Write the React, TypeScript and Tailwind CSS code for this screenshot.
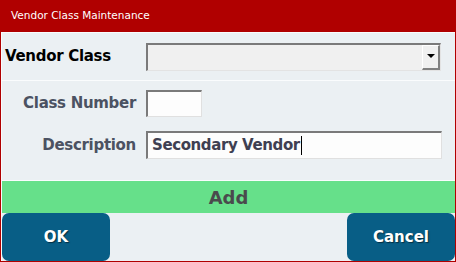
export default function App() {
  const font = { fontFamily: '"DejaVu Sans", Tahoma, sans-serif' }
  return (
    <div className="w-[456px] h-[262px] bg-[#b00000] flex flex-col pl-[1px] pr-[1px] pb-[1px]" style={font}>
      <div className="h-[32px] flex items-center pl-[10px] text-white text-[10.5px]">
        Vendor Class Maintenance
      </div>
      <div className="flex-1 flex flex-col bg-[#fafcfd] pl-[1px] pt-[1px]">
        <div className="h-[47px] bg-[#ebf0f3] flex items-center pl-[3px]">
          <span className="w-[141px] text-[15px] font-bold text-black tracking-[-0.3px]">Vendor Class</span>
          <div className="w-[295px] h-[28px] bg-[#f0f0f0] border-t-2 border-l-2 border-[#7a7a7a] border-b border-r border-b-[#e3e3e3] border-r-[#e3e3e3] flex justify-end items-stretch">
            <div className="w-[18px] border border-t-white border-l-white border-b-[#808080] border-r-[#808080] border-b-2 border-r-2 bg-[#f0f0f0] flex items-center justify-center">
              <svg width="8" height="5" viewBox="0 0 8 5"><path d="M0 0h8L4 4z" fill="#000" /></svg>
            </div>
          </div>
        </div>
        <div className="h-[1px]" />
        <div className="h-[99px] bg-[#ebf0f3] flex flex-col pt-[9px] gap-[14px]">
          <div className="flex items-center">
            <span className="w-[134px] text-right text-[15px] font-bold text-[#4b5262] tracking-[-0.3px]">Class Number</span>
            <div className="ml-[10px] w-[56px] h-[27px] bg-[#fdfdfd] border-t-2 border-l-2 border-[#7a7a7a] border-b border-r border-b-[#e0e0e0] border-r-[#e0e0e0]" />
          </div>
          <div className="flex items-center">
            <span className="w-[134px] text-right text-[15px] font-bold text-[#4b5262] tracking-[-0.3px]">Description</span>
            <div className="ml-[10px] w-[296px] h-[28px] bg-[#fdfdfd] border-t-2 border-l-2 border-[#7a7a7a] border-b border-r border-b-[#e0e0e0] border-r-[#e0e0e0] flex items-center pl-[4px]">
              <span className="text-[15px] font-bold text-[#3f4052] tracking-[-0.4px]">Secondary Vendor</span>
              <span className="w-[1px] h-[19px] bg-black ml-[1px]" />
            </div>
          </div>
        </div>
        <div className="h-[1px]" />
        <div className="h-[32px] bg-[#66e08a] flex items-center justify-center text-[18px] font-bold text-[#4a4a4d]">
          Add
        </div>
        <div className="flex-1 bg-[#ebf0f3] flex justify-between items-stretch">
          <button className="w-[108px] rounded-[7px] bg-[#085e86] text-white text-[15px] font-bold [text-shadow:1px_1px_1px_rgba(0,0,0,0.5)]">OK</button>
          <button className="w-[108px] rounded-[7px] bg-[#085e86] text-white text-[15px] font-bold [text-shadow:1px_1px_1px_rgba(0,0,0,0.5)]">Cancel</button>
        </div>
      </div>
    </div>
  )
}
